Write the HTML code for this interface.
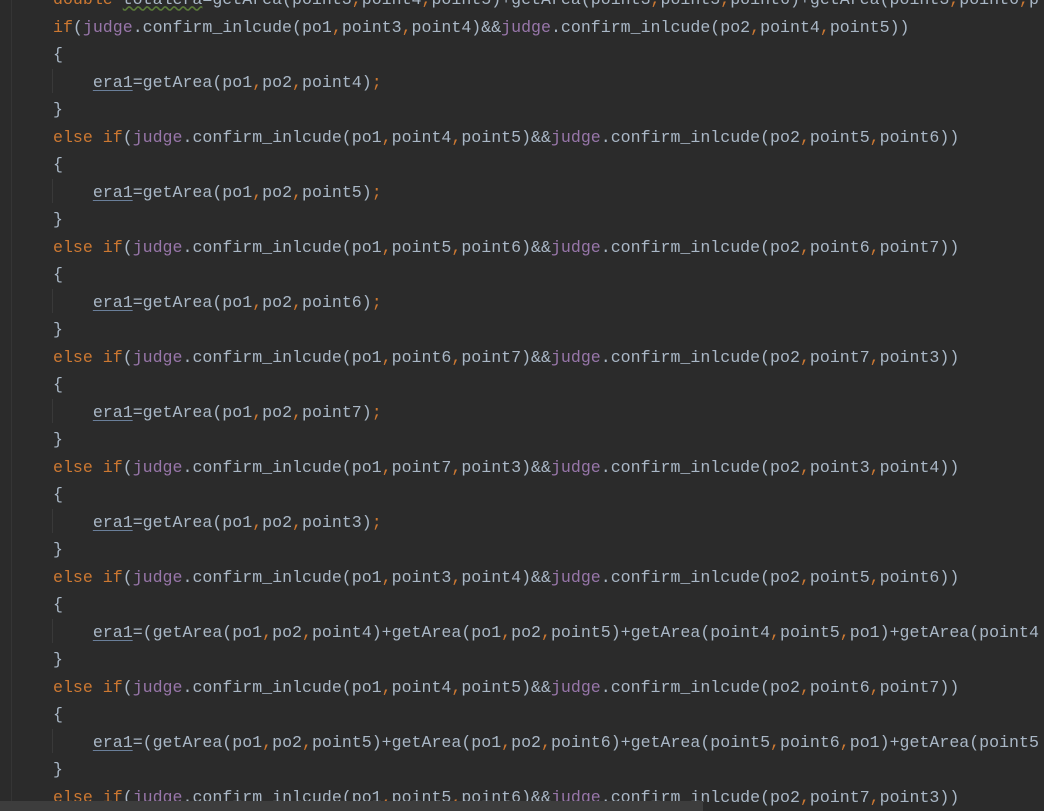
<!DOCTYPE html>
<html><head><meta charset="utf-8"><style>
html,body{margin:0;padding:0;background:#2b2b2b;width:1044px;height:811px;overflow:hidden;}
.g{position:absolute;left:11px;top:0;width:1px;height:811px;background:#353535;}
.code{position:absolute;left:53px;top:-13.75px;font-family:"Liberation Mono",monospace;font-size:16.6px;line-height:27.5px;color:#a9b7c6;white-space:pre;}
.k{color:#cc7832}.p{color:#9876aa}.u{text-decoration:underline;text-decoration-color:#6a7f9a;text-underline-offset:3px}
.ig{position:absolute;left:52px;width:1px;height:24px;background:#393939;}
.bar{position:absolute;left:0;top:801px;width:703px;height:10px;background:#3d3d3d;}
.w{text-decoration:underline wavy #5a7a3a;}
</style></head><body>
<div class="g"></div>
<div class="ig" style="top:69px"></div><div class="ig" style="top:179px"></div><div class="ig" style="top:289px"></div><div class="ig" style="top:399px"></div><div class="ig" style="top:509px"></div><div class="ig" style="top:619px"></div><div class="ig" style="top:729px"></div>
<div class="code"><span class="k">double </span><span class="w">totalera</span>=getArea(point3<span class="k">,</span>point4<span class="k">,</span>point5)+getArea(point3<span class="k">,</span>point5<span class="k">,</span>point6)+getArea(point3<span class="k">,</span>point6<span class="k">,</span>p
<span class="k">if</span>(<span class="p">judge</span>.confirm_inlcude(po1<span class="k">,</span>point3<span class="k">,</span>point4)&amp;&amp;<span class="p">judge</span>.confirm_inlcude(po2<span class="k">,</span>point4<span class="k">,</span>point5))
{
    <span class="u">era1</span>=getArea(po1<span class="k">,</span>po2<span class="k">,</span>point4)<span class="k">;</span>
}
<span class="k">else if</span>(<span class="p">judge</span>.confirm_inlcude(po1<span class="k">,</span>point4<span class="k">,</span>point5)&amp;&amp;<span class="p">judge</span>.confirm_inlcude(po2<span class="k">,</span>point5<span class="k">,</span>point6))
{
    <span class="u">era1</span>=getArea(po1<span class="k">,</span>po2<span class="k">,</span>point5)<span class="k">;</span>
}
<span class="k">else if</span>(<span class="p">judge</span>.confirm_inlcude(po1<span class="k">,</span>point5<span class="k">,</span>point6)&amp;&amp;<span class="p">judge</span>.confirm_inlcude(po2<span class="k">,</span>point6<span class="k">,</span>point7))
{
    <span class="u">era1</span>=getArea(po1<span class="k">,</span>po2<span class="k">,</span>point6)<span class="k">;</span>
}
<span class="k">else if</span>(<span class="p">judge</span>.confirm_inlcude(po1<span class="k">,</span>point6<span class="k">,</span>point7)&amp;&amp;<span class="p">judge</span>.confirm_inlcude(po2<span class="k">,</span>point7<span class="k">,</span>point3))
{
    <span class="u">era1</span>=getArea(po1<span class="k">,</span>po2<span class="k">,</span>point7)<span class="k">;</span>
}
<span class="k">else if</span>(<span class="p">judge</span>.confirm_inlcude(po1<span class="k">,</span>point7<span class="k">,</span>point3)&amp;&amp;<span class="p">judge</span>.confirm_inlcude(po2<span class="k">,</span>point3<span class="k">,</span>point4))
{
    <span class="u">era1</span>=getArea(po1<span class="k">,</span>po2<span class="k">,</span>point3)<span class="k">;</span>
}
<span class="k">else if</span>(<span class="p">judge</span>.confirm_inlcude(po1<span class="k">,</span>point3<span class="k">,</span>point4)&amp;&amp;<span class="p">judge</span>.confirm_inlcude(po2<span class="k">,</span>point5<span class="k">,</span>point6))
{
    <span class="u">era1</span>=(getArea(po1<span class="k">,</span>po2<span class="k">,</span>point4)+getArea(po1<span class="k">,</span>po2<span class="k">,</span>point5)+getArea(point4<span class="k">,</span>point5<span class="k">,</span>po1)+getArea(point4
}
<span class="k">else if</span>(<span class="p">judge</span>.confirm_inlcude(po1<span class="k">,</span>point4<span class="k">,</span>point5)&amp;&amp;<span class="p">judge</span>.confirm_inlcude(po2<span class="k">,</span>point6<span class="k">,</span>point7))
{
    <span class="u">era1</span>=(getArea(po1<span class="k">,</span>po2<span class="k">,</span>point5)+getArea(po1<span class="k">,</span>po2<span class="k">,</span>point6)+getArea(point5<span class="k">,</span>point6<span class="k">,</span>po1)+getArea(point5
}
<span class="k">else if</span>(<span class="p">judge</span>.confirm_inlcude(po1<span class="k">,</span>point5<span class="k">,</span>point6)&amp;&amp;<span class="p">judge</span>.confirm_inlcude(po2<span class="k">,</span>point7<span class="k">,</span>point3))</div>
<div class="bar"></div>
</body></html>
